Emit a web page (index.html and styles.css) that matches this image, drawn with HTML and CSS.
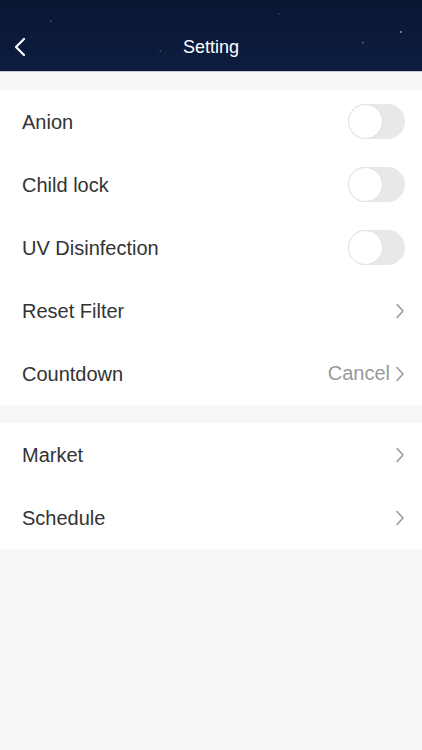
FILE: index.html
```html
<!DOCTYPE html>
<html lang="en">
<head>
  <meta charset="UTF-8">
  <meta name="viewport" content="width=device-width, initial-scale=1.0">
  <title>Setting</title>
  <link rel="stylesheet" href="styles.css">
</head>
<body>
  <header class="top-bar">
    <button class="back" aria-label="Back">
      <svg width="14" height="20" viewBox="0 0 14 20"><path d="M11 2 L3 10 L11 18" fill="none" stroke="#fff" stroke-width="2.2" stroke-linecap="round" stroke-linejoin="round"/></svg>
    </button>
    <h1>Setting</h1>
  </header>

  <section class="group">
    <div class="row">
      <span class="label">Anion</span>
      <span class="switch"><span class="knob"></span></span>
    </div>
    <div class="row">
      <span class="label">Child lock</span>
      <span class="switch"><span class="knob"></span></span>
    </div>
    <div class="row">
      <span class="label">UV Disinfection</span>
      <span class="switch"><span class="knob"></span></span>
    </div>
    <div class="row">
      <span class="label">Reset Filter</span>
      <span class="more">
        <svg class="chev" width="10" height="16" viewBox="0 0 10 16"><path d="M2 1.5 L8 8 L2 14.5" fill="none" stroke="#999" stroke-width="1.5" stroke-linecap="round" stroke-linejoin="round"/></svg>
      </span>
    </div>
    <div class="row">
      <span class="label">Countdown</span>
      <span class="more">
        <span class="value">Cancel</span>
        <svg class="chev" width="10" height="16" viewBox="0 0 10 16"><path d="M2 1.5 L8 8 L2 14.5" fill="none" stroke="#999" stroke-width="1.5" stroke-linecap="round" stroke-linejoin="round"/></svg>
      </span>
    </div>
  </section>

  <section class="group">
    <div class="row">
      <span class="label">Market</span>
      <span class="more">
        <svg class="chev" width="10" height="16" viewBox="0 0 10 16"><path d="M2 1.5 L8 8 L2 14.5" fill="none" stroke="#999" stroke-width="1.5" stroke-linecap="round" stroke-linejoin="round"/></svg>
      </span>
    </div>
    <div class="row">
      <span class="label">Schedule</span>
      <span class="more">
        <svg class="chev" width="10" height="16" viewBox="0 0 10 16"><path d="M2 1.5 L8 8 L2 14.5" fill="none" stroke="#999" stroke-width="1.5" stroke-linecap="round" stroke-linejoin="round"/></svg>
      </span>
    </div>
  </section>
</body>
</html>
```

FILE: styles.css
```css
body {
  margin: 0;
  font-family: "Liberation Sans", Arial, sans-serif;
  background-color: #f7f7f7;
  min-height: 750px;
}
.top-bar {
  height: 72px;
  background-color: #0b1a3a;
  background-image:
    radial-gradient(circle at 12% 30%, rgba(255,255,255,0.25) 0.6px, transparent 1.2px),
    radial-gradient(circle at 38% 72%, rgba(255,255,255,0.2) 0.6px, transparent 1.2px),
    radial-gradient(circle at 66% 20%, rgba(255,255,255,0.2) 0.6px, transparent 1.2px),
    radial-gradient(circle at 86% 60%, rgba(255,255,255,0.3) 0.7px, transparent 1.3px),
    radial-gradient(circle at 95% 45%, rgba(255,255,255,0.4) 0.8px, transparent 1.4px),
    linear-gradient(180deg, #0a1733, #0d1d40);
  position: relative;
  display: flex;
  align-items: center;
  justify-content: center;
  padding-top: 24px;
  box-sizing: border-box;
  border-bottom: 1px solid #c9ccd3;
}
.top-bar h1 {
  margin: 0;
  font-size: 18px;
  font-weight: normal;
  color: #fff;
}
.back {
  position: absolute;
  left: 12px;
  top: 37px;
  background: none;
  border: none;
  padding: 0;
  width: 16px;
  height: 22px;
}
.group {
  background: #fff;
  margin-top: 18px;
}
.row {
  height: 63px;
  display: flex;
  align-items: center;
  justify-content: space-between;
  padding: 0 17px 0 22px;
}
.label {
  font-size: 20px;
  color: #333;
  padding-top: 1px;
}
.more {
  display: flex;
  align-items: center;
  gap: 5px;
}
.value {
  font-size: 20px;
  color: #999;
}
.chev {
  display: block;
}
.switch {
  width: 57px;
  height: 35px;
  border-radius: 18px;
  background: #e8e8e8;
  display: flex;
  align-items: center;
  padding: 1px;
  box-sizing: border-box;
}
.knob {
  width: 33px;
  height: 33px;
  border-radius: 50%;
  background: #fff;
  box-shadow: 0 0 0 1px #e2e2e2;
}
```
